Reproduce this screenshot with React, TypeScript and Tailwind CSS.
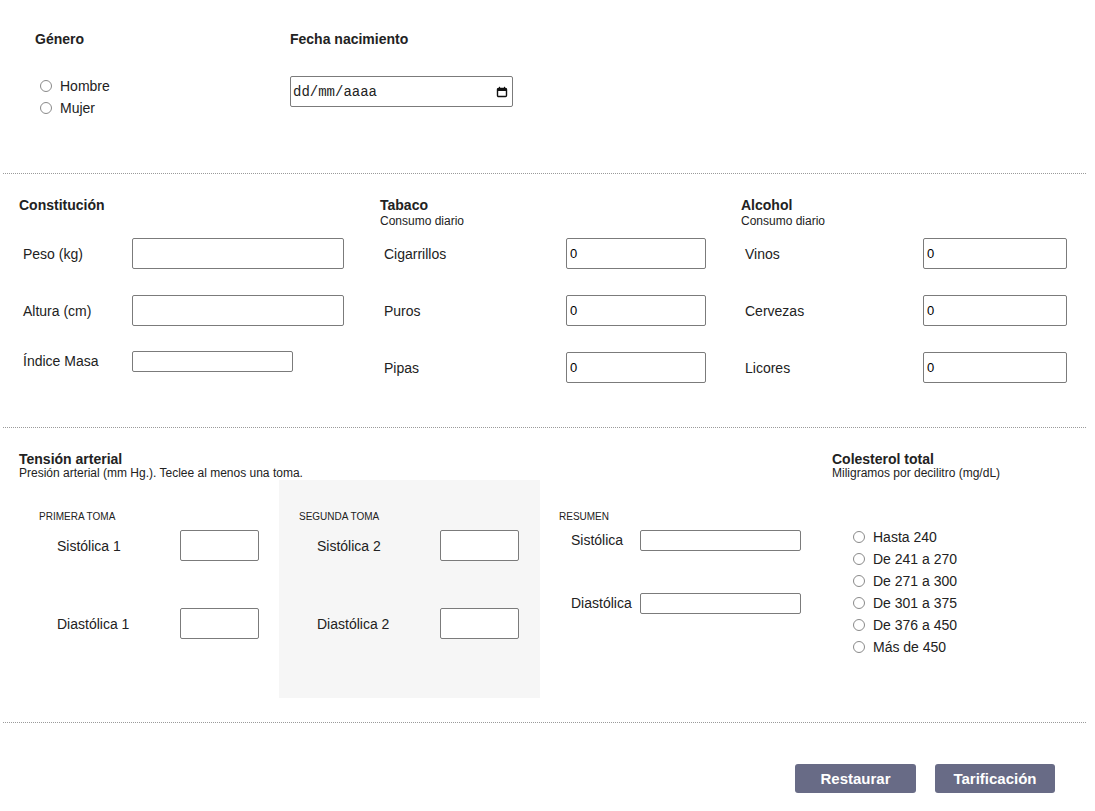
import React from "react";

const Radio = ({ label }: { label: string }) => (
    <label className="flex items-center h-[22px]">
        <span className="w-[12px] h-[12px] rounded-full border border-[#8a8a8a] bg-white mr-[8px] shrink-0" />
        <span className="text-[14px] text-[#222] pt-[1px]">{label}</span>
    </label>
);

const Hr = () => (
    <div className="mx-[3px] w-[1083px] border-t border-dotted border-[#9a9a9a]" />
);

const inputCls =
    "border border-[#7b7b7b] rounded-[2px] bg-white px-[3px] text-[13px] text-black outline-none";

export default function App() {
    const tabaco = ["Cigarrillos", "Puros", "Pipas"];
    const alcohol = ["Vinos", "Cervezas", "Licores"];
    const colesterol = [
        "Hasta 240",
        "De 241 a 270",
        "De 271 a 300",
        "De 301 a 375",
        "De 376 a 450",
        "Más de 450",
    ];

    return (
        <div className="w-[1095px] bg-white text-[#222] font-['Liberation_Sans',Arial,sans-serif]">
            {/* Datos personales */}
            <section className="flex h-[173px] pl-[35px] pt-[31px]">
                <div className="w-[255px]">
                    <h3 className="text-[14px] font-bold leading-[17px]">Género</h3>
                    <div className="mt-[27px] ml-[5px] flex flex-col">
                        <Radio label="Hombre" />
                        <Radio label="Mujer" />
                    </div>
                </div>
                <div>
                    <h3 className="text-[14px] font-bold leading-[17px]">Fecha nacimiento</h3>
                    <div className="mt-[28px] w-[223px] h-[31px] border border-[#7b7b7b] rounded-[2px] flex items-center justify-between pl-[2px] pr-[4px]">
                        <span className="font-['Liberation_Mono',monospace] text-[14px] text-[#222] pt-[1px]">
                            dd/mm/aaaa
                        </span>
                        <svg width="12" height="12" viewBox="0 0 12 12" fill="none">
                            <rect x="1.5" y="2.5" width="9" height="8" rx="1" stroke="#111" strokeWidth="1.4" />
                            <rect x="1.5" y="2.5" width="9" height="2.5" fill="#111" />
                            <line x1="3.5" y1="0.8" x2="3.5" y2="2.5" stroke="#111" strokeWidth="1.2" />
                            <line x1="8.5" y1="0.8" x2="8.5" y2="2.5" stroke="#111" strokeWidth="1.2" />
                        </svg>
                    </div>
                </div>
            </section>

            <Hr />

            {/* Constitución, tabaco, alcohol */}
            <section className="flex h-[253px] pl-[19px] pt-[23px]">
                <div className="w-[361px]">
                    <div className="h-[31px]">
                        <h3 className="text-[14px] font-bold leading-[17px]">Constitución</h3>
                    </div>
                    <div className="mt-[10px] flex items-center h-[31px]">
                        <span className="w-[113px] pl-[4px] pt-[1px] text-[14px]">Peso (kg)</span>
                        <input className={`${inputCls} w-[212px] h-[31px]`} />
                    </div>
                    <div className="mt-[26px] flex items-center h-[31px]">
                        <span className="w-[113px] pl-[4px] pt-[1px] text-[14px]">Altura (cm)</span>
                        <input className={`${inputCls} w-[212px] h-[31px]`} />
                    </div>
                    <div className="mt-[25px] flex items-center h-[21px]">
                        <span className="w-[113px] pl-[4px] text-[14px]">Índice Masa</span>
                        <input className={`${inputCls} w-[161px] h-[21px]`} />
                    </div>
                </div>

                <div className="w-[361px]">
                    <div className="h-[31px]">
                        <h3 className="text-[14px] font-bold leading-[17px]">Tabaco</h3>
                        <p className="text-[12px] leading-[14px]">Consumo diario</p>
                    </div>
                    {tabaco.map((t, i) => (
                        <div
                            key={t}
                            className={`flex items-center h-[31px] ${i === 0 ? "mt-[10px]" : "mt-[26px]"}`}
                        >
                            <span className="w-[186px] pl-[4px] pt-[1px] text-[14px]">{t}</span>
                            <input className={`${inputCls} w-[140px] h-[31px]`} defaultValue="0" />
                        </div>
                    ))}
                </div>

                <div className="w-[340px]">
                    <div className="h-[31px]">
                        <h3 className="text-[14px] font-bold leading-[17px]">Alcohol</h3>
                        <p className="text-[12px] leading-[14px]">Consumo diario</p>
                    </div>
                    {alcohol.map((t, i) => (
                        <div
                            key={t}
                            className={`flex items-center h-[31px] ${i === 0 ? "mt-[10px]" : "mt-[26px]"}`}
                        >
                            <span className="w-[182px] pl-[4px] pt-[1px] text-[14px]">{t}</span>
                            <input className={`${inputCls} w-[144px] h-[31px]`} defaultValue="0" />
                        </div>
                    ))}
                </div>
            </section>

            <Hr />

            {/* Tensión arterial y colesterol */}
            <section className="flex h-[294px] pl-[19px] pt-[23px]">
                <div className="w-[813px]">
                    <h3 className="text-[14px] font-bold leading-[16px]">Tensión arterial</h3>
                    <p className="text-[12px] leading-[13px]">
                        Presión arterial (mm Hg.). Teclee al menos una toma.
                    </p>
                    <div className="flex">
                        {[
                            { title: "PRIMERA TOMA", n: 1, w: "w-[260px]", bg: "" },
                            { title: "SEGUNDA TOMA", n: 2, w: "w-[261px]", bg: "bg-[#f6f6f6]" },
                        ].map((b) => (
                            <div key={b.n} className={`${b.w} ${b.bg} h-[218px] pt-[31px]`}>
                                <p className="pl-[20px] text-[10px] leading-[12px] uppercase">{b.title}</p>
                                <div className="mt-[7px] flex items-center h-[31px]">
                                    <span className="w-[161px] pl-[38px] pt-[1px] text-[14px]">Sistólica {b.n}</span>
                                    <input className={`${inputCls} w-[79px] h-[31px]`} />
                                </div>
                                <div className="mt-[47px] flex items-center h-[31px]">
                                    <span className="w-[161px] pl-[38px] pt-[1px] text-[14px]">Diastólica {b.n}</span>
                                    <input className={`${inputCls} w-[79px] h-[31px]`} />
                                </div>
                            </div>
                        ))}
                        <div className="w-[292px] pt-[31px]">
                            <p className="pl-[19px] text-[10px] leading-[12px]">RESUMEN</p>
                            <div className="mt-[7px] flex items-center h-[21px]">
                                <span className="w-[100px] pl-[31px] text-[14px]">Sistólica</span>
                                <input className={`${inputCls} w-[161px] h-[21px]`} />
                            </div>
                            <div className="mt-[42px] flex items-center h-[21px]">
                                <span className="w-[100px] pl-[31px] text-[14px]">Diastólica</span>
                                <input className={`${inputCls} w-[161px] h-[21px]`} />
                            </div>
                        </div>
                    </div>
                </div>

                <div className="w-[240px]">
                    <h3 className="text-[14px] font-bold leading-[16px]">Colesterol total</h3>
                    <p className="text-[12px] leading-[13px]">Miligramos por decilitro (mg/dL)</p>
                    <div className="mt-[46px] ml-[21px] flex flex-col">
                        {colesterol.map((c) => (
                            <Radio key={c} label={c} />
                        ))}
                    </div>
                </div>
            </section>

            <Hr />

            {/* Acciones */}
            <section className="flex justify-end gap-[19px] pr-[40px] pt-[41px] pb-[10px]">
                <button className="w-[121px] h-[29px] pt-[1px] rounded-[3px] bg-[#686b86] text-white text-[15px] font-bold">
                    Restaurar
                </button>
                <button className="w-[120px] h-[29px] pt-[1px] rounded-[3px] bg-[#686b86] text-white text-[15px] font-bold">
                    Tarificación
                </button>
            </section>
        </div>
    );
}
